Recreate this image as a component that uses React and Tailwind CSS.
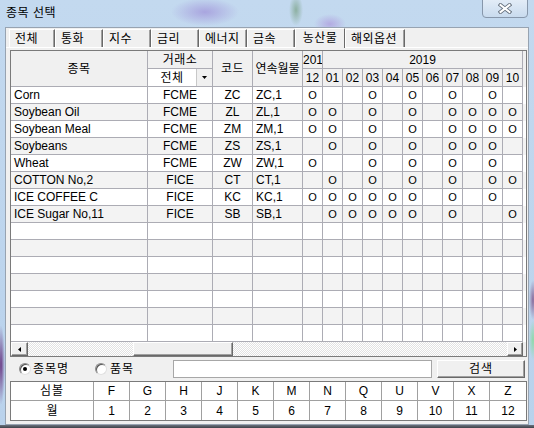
import React from 'react';

const months = ['12', '01', '02', '03', '04', '05', '06', '07', '08', '09', '10'];
const items = [
  { name: 'Corn', ex: 'FCME', code: 'ZC', cont: 'ZC,1', m: '10010101010' },
  { name: 'Soybean Oil', ex: 'FCME', code: 'ZL', cont: 'ZL,1', m: '11010101111' },
  { name: 'Soybean Meal', ex: 'FCME', code: 'ZM', cont: 'ZM,1', m: '11010101111' },
  { name: 'Soybeans', ex: 'FCME', code: 'ZS', cont: 'ZS,1', m: '01010101110' },
  { name: 'Wheat', ex: 'FCME', code: 'ZW', cont: 'ZW,1', m: '10010101010' },
  { name: 'COTTON No,2', ex: 'FICE', code: 'CT', cont: 'CT,1', m: '01010101011' },
  { name: 'ICE COFFEE C', ex: 'FICE', code: 'KC', cont: 'KC,1', m: '11111101010' },
  { name: 'ICE Sugar No,11', ex: 'FICE', code: 'SB', cont: 'SB,1', m: '01111101001' },
];
const EMPTY_ROWS = 7;
const tabs = [
  { label: '전체', w: 'w-[46px]' },
  { label: '통화', w: 'w-[48px]' },
  { label: '지수', w: 'w-[48px]' },
  { label: '금리', w: 'w-[48px]' },
  { label: '에너지', w: 'w-[48px]' },
  { label: '금속', w: 'w-[48px]' },
  { label: '농산물', w: 'w-[50px]', active: true },
  { label: '해외옵션', w: 'w-[60px]' },
];
const symbols = ['F', 'G', 'H', 'J', 'K', 'M', 'N', 'Q', 'U', 'V', 'X', 'Z'];

const cols = 'grid grid-cols-[137px_65px_40px_50px_repeat(11,20px)]';
const raised =
  'border border-t-white border-l-white border-r-[#696969] border-b-[#696969] bg-[#f0f0f0] shadow-[inset_-1px_-1px_#a0a0a0]';

function HeadCell({ className = '', children }) {
  return (
    <div className={`flex items-center justify-center overflow-hidden whitespace-nowrap border-r border-b border-[#acacb4] bg-[#f0f0f0] ${className}`}>
      {children}
    </div>
  );
}

function Cell({ className = '', children }) {
  return (
    <div className={`flex items-center overflow-hidden whitespace-nowrap border-r border-b border-[#acacb4] ${className}`}>
      {children}
    </div>
  );
}

function Radio({ checked }) {
  return (
    <span className="flex h-[12px] w-[12px] items-center justify-center rounded-full border border-t-[#8a8a8a] border-l-[#8a8a8a] border-r-[#e0e0e0] border-b-[#e0e0e0] bg-white shadow-[inset_1px_1px_#555]">
      {checked && <span className="h-[4px] w-[4px] rounded-full bg-black" />}
    </span>
  );
}

function CloseGlyph() {
  return (
    <svg width="14" height="11" viewBox="0 0 14 11">
      <path d="M2.5 2 L11.5 9 M11.5 2 L2.5 9" stroke="#66717e" strokeWidth="3.8" strokeLinecap="square" />
      <path d="M2.5 2 L11.5 9 M11.5 2 L2.5 9" stroke="#ffffff" strokeWidth="2" strokeLinecap="square" />
    </svg>
  );
}

export default function App() {
  return (
    <div className="flex h-[428px] w-[534px] flex-col overflow-hidden bg-[radial-gradient(4px_40px_at_1px_365px,#6b3d86,transparent),radial-gradient(4px_20px_at_533px_300px,#8a6a9a,transparent),radial-gradient(4px_20px_at_533px_340px,#8fd8a8,transparent),linear-gradient(#c3d9ef,#b9d2ec)] font-['Liberation_Sans','Noto_Sans_CJK_KR',sans-serif] text-[12px] leading-none text-black">
      {/* title bar */}
      <div className="flex h-[27px] bg-[radial-gradient(34px_14px_at_205px_12px,#a9a5df,transparent),radial-gradient(7px_16px_at_296px_10px,#8db0a2,transparent),radial-gradient(16px_10px_at_330px_24px,#b3abe2,transparent)]">
        <span className="ml-[6px] mt-[7px] text-[12px] tracking-[0.5px]">종목 선택</span>
        <div className="ml-auto mr-[6px] -mt-px flex h-[19px] w-[46px] items-center justify-center rounded-b-[4px] border border-[#8797ab] bg-[linear-gradient(#e2ecf7,#c9dbee)]">
          <CloseGlyph />
        </div>
      </div>

      {/* client panel */}
      <div className="ml-[5px] flex h-[398px] w-[524px] flex-col border border-[#97a3b1] bg-[#f0f0f0]">
        {/* tabs */}
        <div className="flex h-[20px] items-end border-b border-white pl-[3px]">
          {tabs.map((t) =>
            t.active ? (
              <div key={t.label} className={`${t.w} relative -mb-px flex h-[20px] items-center justify-center border-l border-t border-white border-r border-r-[#696969] bg-[#f0f0f0] pb-[2px] tracking-[0.5px]`}>
                {t.label}
              </div>
            ) : (
              <div key={t.label} className={`${t.w} flex h-[18px] items-center border-l border-t border-white border-r border-r-[#696969] pl-[5px] shadow-[inset_-1px_0_#a0a0a0] tracking-[0.5px]`}>
                {t.label}
              </div>
            )
          )}
        </div>

        {/* list grid */}
        <div className="ml-[4px] mt-[2px] w-[517px] border border-[#7a7a7a] bg-[#f0f0f0]">
          <div className={`${cols} grid-rows-[18px_18px]`}>
            <HeadCell className="row-span-2 tracking-[0.5px]">종목</HeadCell>
            <HeadCell className="tracking-[0.5px]">거래소</HeadCell>
            <HeadCell className="row-span-2 tracking-[0.5px]">코드</HeadCell>
            <HeadCell className="row-span-2">연속월물</HeadCell>
            <HeadCell className="justify-start">2018</HeadCell>
            <HeadCell className="col-span-10">2019</HeadCell>
            <div className="flex border-r border-b border-[#acacb4] bg-white">
              <span className="flex flex-1 items-center justify-center tracking-[0.5px]">전체</span>
              <span className="flex w-[16px] items-center justify-center border-l border-[#c8c8c8] bg-[#f0f0f0]">
                <svg width="5" height="3" viewBox="0 0 5 3">
                  <path d="M0 0 H5 L2.5 3 Z" fill="#000" />
                </svg>
              </span>
            </div>
            {months.map((m) => (
              <HeadCell key={m}>{m}</HeadCell>
            ))}
          </div>

          {items.map((it, i) => (
            <div key={it.code} className={`${cols} h-[17px] ${i % 2 ? 'bg-[#f3f3f3]' : 'bg-white'}`}>
              <Cell className="pl-[3px]">{it.name}</Cell>
              <Cell className="justify-center">{it.ex}</Cell>
              <Cell className="justify-center">{it.code}</Cell>
              <Cell className="pl-[3px]">{it.cont}</Cell>
              {it.m.split('').map((v, k) => (
                <Cell key={k} className="justify-center text-[11px]">{v === '1' ? 'O' : ''}</Cell>
              ))}
            </div>
          ))}
          {Array.from({ length: EMPTY_ROWS }).map((_, j) => (
            <div key={j} className={`${cols} h-[17px] ${(items.length + j) % 2 ? 'bg-[#f3f3f3]' : 'bg-white'}`}>
              {Array.from({ length: 15 }).map((__, k) => (
                <Cell key={k} />
              ))}
            </div>
          ))}

          {/* horizontal scrollbar */}
          <div className="flex h-[14px] w-[512px] bg-[repeating-conic-gradient(#ffffff_0_25%,#e2e2e2_0_50%)] bg-[length:2px_2px]">
            <div className={`${raised} flex w-[17px] items-center justify-center`}>
              <svg width="3" height="5" viewBox="0 0 3 5">
                <path d="M3 0 L0 2.5 L3 5 Z" fill="#000" />
              </svg>
            </div>
            <div className={`${raised} ml-[105px] w-[100px]`} />
            <div className={`${raised} ml-auto flex w-[16px] items-center justify-center`}>
              <svg width="3" height="5" viewBox="0 0 3 5">
                <path d="M0 0 L3 2.5 L0 5 Z" fill="#000" />
              </svg>
            </div>
          </div>
        </div>

        {/* search row */}
        <div className="flex h-[24px] items-center">
          <span className="ml-[13px]">
            <Radio checked />
          </span>
          <span className="ml-[2px] w-[62px] text-[12px] tracking-[1px]">종목명</span>
          <Radio />
          <span className="ml-[3px] w-[63px] tracking-[1px]">품목</span>
          <div className="h-[18px] w-[259px] border border-[#a7a7a7] bg-white" />
          <div className={`${raised} ml-[5px] flex h-[18px] w-[88px] items-center justify-center tracking-[1px]`}>검색</div>
        </div>

        {/* month code table */}
        <div className="ml-[4px] w-[517px] border border-[#7a7a7a] bg-white">
          <div className="grid grid-cols-[83px_repeat(12,36px)] grid-rows-[19px_19px]">
            <div className="flex items-center justify-center border-r border-b border-[#a0a0a0] tracking-[1px]">심볼</div>
            {symbols.map((s, k) => (
              <div key={s} className={`flex items-center justify-center border-b border-[#a0a0a0] ${k < 11 ? 'border-r' : ''}`}>
                {s}
              </div>
            ))}
            <div className="flex items-center justify-center border-r border-[#a0a0a0]">월</div>
            {symbols.map((s, k) => (
              <div key={s} className={`flex items-center justify-center border-[#a0a0a0] ${k < 11 ? 'border-r' : ''}`}>
                {k + 1}
              </div>
            ))}
          </div>
        </div>
      </div>

      <div className="h-[3px] bg-[linear-gradient(#6a717c,#3f434a)]" />
    </div>
  );
}
